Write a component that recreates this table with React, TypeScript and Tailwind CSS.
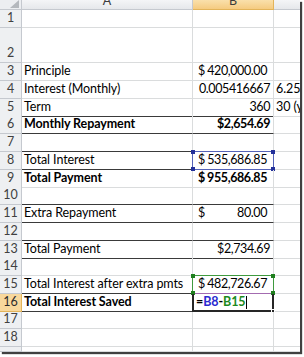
type Row = {
  n: number;
  h: string;
  a?: string;
  bold?: boolean;
  dark?: boolean;
  b?: React.ReactNode;
  c?: string;
  active?: boolean;
};

const font = { fontFamily: "Lato, 'Liberation Sans', sans-serif" };

function Acct({ v, bold }: { v: string; bold?: boolean }) {
  return (
    <div className={`flex w-full justify-between pl-[5px] pr-[6px] ${bold ? "font-bold" : ""}`}>
      <span>$</span>
      <span className="tracking-[-0.4px]">{v}</span>
    </div>
  );
}

function Right({ v, bold }: { v: string; bold?: boolean }) {
  return <div className={`w-full pr-[3px] text-right tracking-[-0.4px] ${bold ? "font-bold" : ""}`}>{v}</div>;
}

function Handles({ color }: { color: string }) {
  const sq = `absolute h-[4px] w-[4px] ${color}`;
  return (
    <>
      <span className={`${sq} -left-[2px] -top-[2px]`} />
      <span className={`${sq} -right-[2px] -top-[2px]`} />
      <span className={`${sq} -left-[2px] -bottom-[2px]`} />
      <span className={`${sq} -right-[2px] -bottom-[2px]`} />
    </>
  );
}

const rows: Row[] = [
  { n: 1, h: "h-[18px]" },
  { n: 2, h: "h-[35px]" },
  { n: 3, h: "h-[17.75px]", a: "Principle", b: <Acct v="420,000.00" /> },
  { n: 4, h: "h-[17.75px]", a: "Interest (Monthly)", b: <Right v="0.005416667" />, c: "6.25%" },
  { n: 5, h: "h-[17.75px]", a: "Term", b: <Right v="360" />, c: "30 (years)", dark: true },
  { n: 6, h: "h-[17.75px]", a: "Monthly Repayment", bold: true, b: <Right v="$2,654.69" bold />, dark: true },
  { n: 7, h: "h-[17.75px]", dark: true },
  { n: 8, h: "h-[17.75px]", a: "Total Interest", b: <Acct v="535,686.85" />, dark: true },
  { n: 9, h: "h-[17.75px]", a: "Total Payment", bold: true, b: <Acct v="955,686.85" bold /> },
  { n: 10, h: "h-[17.75px]", dark: true },
  { n: 11, h: "h-[17.75px]", a: "Extra Repayment", b: <Acct v="80.00" />, dark: true },
  { n: 12, h: "h-[17.75px]", dark: true },
  { n: 13, h: "h-[17.75px]", a: "Total Payment", b: <Right v="$2,734.69" />, dark: true },
  { n: 14, h: "h-[17.75px]" },
  { n: 15, h: "h-[17.75px]", a: "Total Interest after extra pmts", b: <Acct v="482,726.67" />, dark: true },
  {
    n: 16,
    h: "h-[17.75px]",
    a: "Total Interest Saved",
    bold: true,
    active: true,
    dark: true,
    b: (
      <div className="flex w-full items-end pl-[3px] font-bold">
        <span>=</span>
        <span className="text-[#2a2ad0]">B8</span>
        <span>-</span>
        <span className="text-[#1d8a1d]">B15</span>
        <span className="mb-[1px] ml-[1px] h-[13px] w-px bg-black" />
      </div>
    ),
  },
  { n: 17, h: "h-[17.75px]" },
  { n: 18, h: "h-[17.75px]" },
  { n: 19, h: "h-[5px]" },
];

const cols = "grid grid-cols-[22px_171px_81px_26px]";
const grid = "border-b border-r border-[#dadcdd]";

export default function App() {
  return (
    <div className="h-[357px] w-[304px] overflow-hidden bg-white" style={font}>
      <div className="h-[352px] w-[300px] overflow-hidden bg-white text-[12.5px] leading-4 tracking-[-0.1px] text-black shadow-[2px_2px_1px_rgba(0,0,0,0.75)]">
        {/* column headers */}
        <div className={`${cols} h-[10px] text-[#3b3b3b]`}>
          <div className="relative border-b border-r border-[#c5c9cf] bg-[#eceef1]">
            <svg className="absolute bottom-[1px] right-[2px]" width="9" height="8" viewBox="0 0 9 8">
              <polygon points="9,0 9,8 0,8" fill="#b4b8bd" />
            </svg>
          </div>
          <div className="flex items-end justify-center overflow-hidden border-b border-r border-[#c5c9cf] bg-gradient-to-b from-[#f4f5f7] to-[#e6e8eb]">
            A
          </div>
          <div className="flex items-end justify-center overflow-hidden border-b border-r border-[#e3b45a] bg-gradient-to-b from-[#fae0ab] to-[#f5cb80]">
            B
          </div>
          <div className="border-b border-[#c5c9cf] bg-gradient-to-b from-[#f4f5f7] to-[#e6e8eb]" />
        </div>

        {rows.map((r) => (
          <div key={r.n} className={`${cols} ${r.h}`}>
            <div
              className={`flex items-end justify-center overflow-hidden border-b border-r pb-[1px] ${
                r.active
                  ? "border-[#e3b45a] bg-[#f8d89c] text-[#2c2c2c]"
                  : "border-[#c5c9cf] bg-[#eef0f2] text-[#404040]"
              }`}
            >
              {r.n < 19 ? r.n : null}
            </div>
            <div
              className={`flex items-end overflow-visible whitespace-nowrap pb-[1px] pl-[2px] ${grid} ${
                r.dark ? "border-b-[#3a3a3a]" : ""
              } ${r.bold ? "font-bold" : ""}`}
            >
              {r.a}
            </div>
            <div
              className={`relative flex items-end whitespace-nowrap pb-[1px] ${grid} ${
                r.dark ? "border-b-[#3a3a3a]" : ""
              }`}
            >
              {r.b}
              {r.n === 8 && (
                <div className="absolute -bottom-px -left-px -right-px -top-px border border-[#5563b8]">
                  <Handles color="bg-[#23309a]" />
                </div>
              )}
              {r.n === 15 && (
                <div className="absolute -bottom-px -left-px -right-px -top-px border border-[#3f9a3f] border-b-[#a36bb0]">
                  <Handles color="bg-[#1f7f1f]" />
                </div>
              )}
              {r.active && (
                <div className="absolute -bottom-px -left-px -right-px top-0 border-2 border-t-0 border-[#262626]">
                  <span className="absolute -bottom-[3px] -right-[3px] h-[4px] w-[4px] border border-white bg-[#262626]" />
                </div>
              )}
            </div>
            <div className="flex items-end overflow-hidden whitespace-nowrap border-b border-[#dadcdd] pb-[1px] pl-[2px]">
              {r.c}
            </div>
          </div>
        ))}
      </div>
    </div>
  );
}
